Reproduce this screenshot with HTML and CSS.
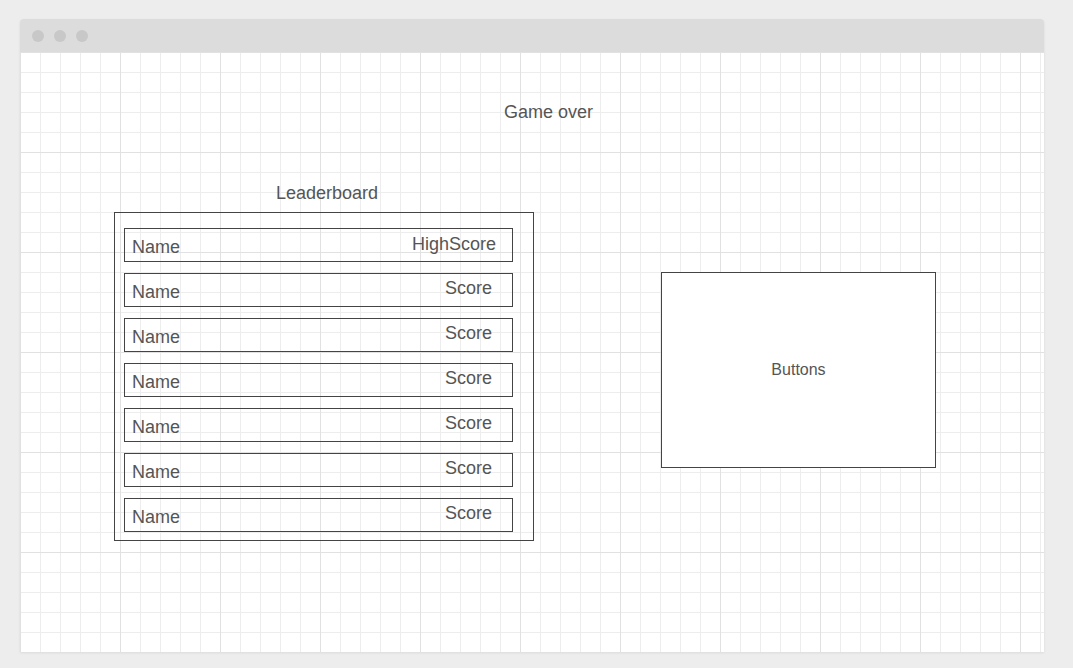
FILE: index.html
```html
<!DOCTYPE html>
<html lang="en">
<head>
  <meta charset="UTF-8">
  <meta name="viewport" content="width=device-width, initial-scale=1.0">
  <title>Game over – wireframe</title>
  <link rel="stylesheet" href="styles.css">
</head>
<body>
  <!-- browser-style frame -->
  <div class="window">
    <div class="titlebar">
      <span class="dot"></span>
      <span class="dot"></span>
      <span class="dot"></span>
    </div>

    <!-- grid canvas -->
    <div class="canvas">
      <h1 class="title">Game over</h1>

      <div class="board-row">
        <div class="leaderboard">
          <h2 class="board-label">Leaderboard</h2>
          <div class="board">
            <div class="entry entry-head"><span class="name">Name</span><span class="score">HighScore</span></div>
            <div class="entry"><span class="name">Name</span><span class="score">Score</span></div>
            <div class="entry"><span class="name">Name</span><span class="score">Score</span></div>
            <div class="entry"><span class="name">Name</span><span class="score">Score</span></div>
            <div class="entry"><span class="name">Name</span><span class="score">Score</span></div>
            <div class="entry"><span class="name">Name</span><span class="score">Score</span></div>
            <div class="entry"><span class="name">Name</span><span class="score">Score</span></div>
          </div>
        </div>

        <div class="buttons">Buttons</div>
      </div>
    </div>
  </div>
</body>
</html>
```

FILE: styles.css
```css
/* Reset & page */
html, body {
  margin: 0;
  padding: 0;
}
body {
  padding: 19px 0 0 20px;
  background: #ededed;
  font-family: "Liberation Sans", Arial, sans-serif;
  color: #555;
  height: 668px;
  box-sizing: border-box;
  overflow: hidden;
}
/* Browser frame */
.window {
  width: 1024px;
  border-radius: 4px 4px 0 0;
  box-shadow: 0 1px 3px rgba(0,0,0,0.08);
  overflow: hidden;
}
.titlebar {
  height: 33px;
  background: #dcdcdc;
  display: flex;
  align-items: center;
  gap: 10px;
  padding-left: 12px;
  box-sizing: border-box;
}
.dot {
  width: 12px; height: 12px;
  border-radius: 50%;
  background: #c8c8c8;
}
/* Grid canvas */
.canvas {
  height: 600px;
  box-sizing: border-box;
  padding-top: 50px;
  background-color: #fff;
  background-image:
    linear-gradient(to right, #e1e1e1 1px, transparent 1px),
    linear-gradient(to bottom, #e1e1e1 1px, transparent 1px),
    linear-gradient(to right, #ededed 1px, transparent 1px),
    linear-gradient(to bottom, #ededed 1px, transparent 1px);
  background-size: 100px 100px, 100px 100px, 20px 20px, 20px 20px;
}
.title, .board-label {
  margin: 0;
  font-size: 18px;
  font-weight: normal;
  line-height: 20px;
}
.title {
  padding-left: 484px;
}
/* Leaderboard + buttons */
.board-row {
  display: flex;
  align-items: flex-start;
  margin-top: 61px;
  padding-left: 94px;
}
.board-label {
  padding-left: 162px;
  margin-bottom: 9px;
}
.board {
  width: 420px;
  box-sizing: border-box;
  border: 1px solid #444;
  padding: 15px 20px 8px 9px;
  display: flex;
  flex-direction: column;
  gap: 11px;
}
.entry {
  height: 34px;
  box-sizing: border-box;
  border: 1px solid #444;
  padding: 8px 20px 0 7px;
  display: flex;
  justify-content: space-between;
  align-items: flex-start;
  font-size: 18px;
  line-height: 20px;
}
.score { margin-top: -4px; }
.entry-head { padding-right: 16px; }
.entry-head .score { margin-top: -3px; }
.buttons {
  width: 275px;
  height: 196px;
  box-sizing: border-box;
  margin: 89px 0 0 127px;
  border: 1px solid #444;
  background: #fff;
  display: flex;
  align-items: center;
  justify-content: center;
  font-size: 16px;
}
```
